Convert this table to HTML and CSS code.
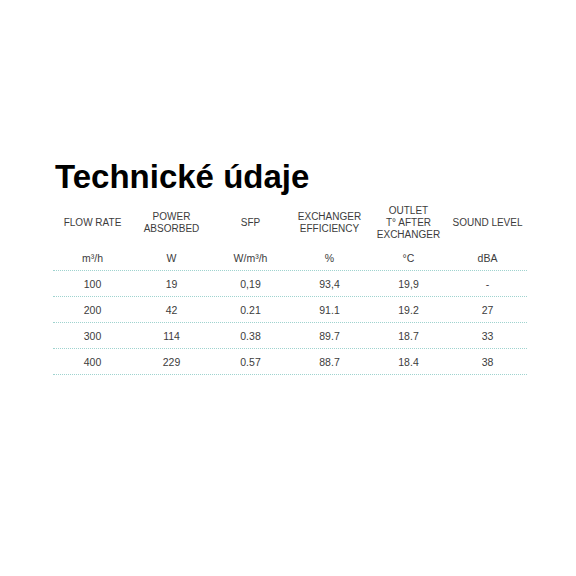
FILE: index.html
```html
<!DOCTYPE html>
<html>
<head>
<meta charset="utf-8">
<link rel="stylesheet" href="styles.css">
</head>
<body>
<div class="page">
  <h1 class="title">Technické údaje</h1>
  <div class="table">
    <div class="row head">
      <div>FLOW RATE</div>
      <div>POWER<br>ABSORBED</div>
      <div>SFP</div>
      <div>EXCHANGER<br>EFFICIENCY</div>
      <div>OUTLET<br>T° AFTER<br>EXCHANGER</div>
      <div>SOUND LEVEL</div>
    </div>
    <div class="row units">
      <div>m³/h</div><div>W</div><div>W/m³/h</div><div>%</div><div>°C</div><div>dBA</div>
    </div>
    <div class="row data">
      <div>100</div><div>19</div><div>0,19</div><div>93,4</div><div>19,9</div><div>-</div>
    </div>
    <div class="row data">
      <div>200</div><div>42</div><div>0.21</div><div>91.1</div><div>19.2</div><div>27</div>
    </div>
    <div class="row data">
      <div>300</div><div>114</div><div>0.38</div><div>89.7</div><div>18.7</div><div>33</div>
    </div>
    <div class="row data">
      <div>400</div><div>229</div><div>0.57</div><div>88.7</div><div>18.4</div><div>38</div>
    </div>
  </div>
</div>
</body>
</html>
```
FILE: styles.css
```css
html, body {
  margin: 0;
  padding: 0;
  background: #ffffff;
}
.page {
  width: 576px;
  height: 576px;
  box-sizing: border-box;
  padding: 157px 49px 0 53px;
  font-family: "Liberation Sans", Arial, sans-serif;
}
.title {
  margin: 0 0 0 2px;
  font-size: 33px;
  line-height: 40px;
  font-weight: bold;
  color: #000;
}
.table {
  margin-top: 3px;
  width: 474px;
}
.row {
  display: grid;
  grid-template-columns: repeat(6, 1fr);
  text-align: center;
  color: #3c3c3c;
}
.head {
  font-size: 10px;
  line-height: 12px;
  height: 46px;
  align-items: center;
}
.units {
  font-size: 10.5px;
  height: 24px;
  line-height: 22px;
  align-items: center;
  border-bottom: 1px dotted #9fd3cf;
}
.data {
  font-size: 10.5px;
  height: 25px;
  align-items: center;
  border-bottom: 1px dotted #9fd3cf;
}
```
